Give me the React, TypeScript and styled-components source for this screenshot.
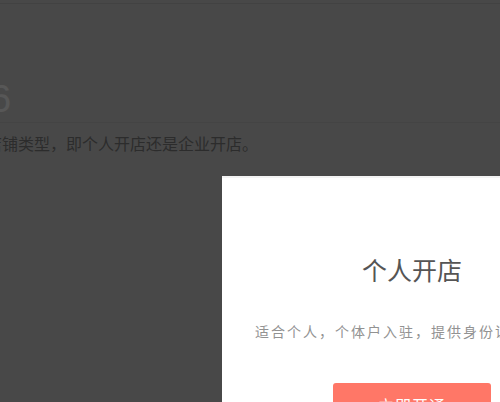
import React from "react";
import styled, { createGlobalStyle } from "styled-components";

const GlobalStyle = createGlobalStyle`
  html, body {
    margin: 0;
    padding: 0;
    width: 100%;
    height: 100%;
    overflow: hidden;
    background: #cecece;
    font-family: "Noto Sans CJK SC", "Noto Sans", sans-serif;
  }
`;

const Page = styled.div`
  position: relative;
  width: 100vw;
  height: 100vh;
  overflow: hidden;
`;

const TopBar = styled.div`
  height: 3px;
  border-bottom: 1px solid #bdbdbd;
`;

const Step = styled.section`
  margin-left: -24px;
  padding-top: 72px;
`;

const StepNumber = styled.h1`
  margin: 0;
  font-family: "Liberation Sans", Arial, sans-serif;
  font-weight: 300;
  font-size: 38px;
  line-height: 46px;
  color: #fafafa;
  border-bottom: 1px solid #c2c2c2;
  padding-left: 14px;
`;

const StepDesc = styled.p`
  margin: 8px 0 0 10px;
  font-size: 16px;
  line-height: 24px;
  color: #7e7e7e;
  white-space: nowrap;
`;

const Overlay = styled.div`
  position: fixed;
  inset: 0;
  background: rgba(0, 0, 0, 0.65);
  padding: 176px 0 0 222px;
`;

const Card = styled.div`
  width: 380px;
  height: 320px;
  background: #fff;
  border-top: 2px solid #f3f3f3;
  display: flex;
  flex-direction: column;
  align-items: center;
  padding-top: 74px;
  box-sizing: border-box;
`;

const Title = styled.h2`
  margin: 0;
  font-size: 25px;
  font-weight: 400;
  line-height: 34px;
  color: #555;
`;

const Desc = styled.p`
  margin: 35px 0 0 6px;
  font-size: 14px;
  line-height: 20px;
  letter-spacing: 2px;
  color: #929292;
  white-space: nowrap;
`;

const OpenButton = styled.button`
  margin-top: 42px;
  width: 158px;
  height: 44px;
  border: none;
  border-radius: 3px;
  background: #ff7767;
  color: #fff;
  font-family: inherit;
  font-size: 16px;
  letter-spacing: 1px;
  cursor: pointer;
`;

const App: React.FC = () => {
  return (
    <Page>
      <GlobalStyle />
      <TopBar />
      <Step>
        <StepNumber>6</StepNumber>
        <StepDesc>店铺类型，即个人开店还是企业开店。</StepDesc>
      </Step>
      <Overlay>
        <Card>
          <Title>个人开店</Title>
          <Desc>适合个人，个体户入驻，提供身份证即可开通</Desc>
          <OpenButton>立即开通</OpenButton>
        </Card>
      </Overlay>
    </Page>
  );
};

export default App;
